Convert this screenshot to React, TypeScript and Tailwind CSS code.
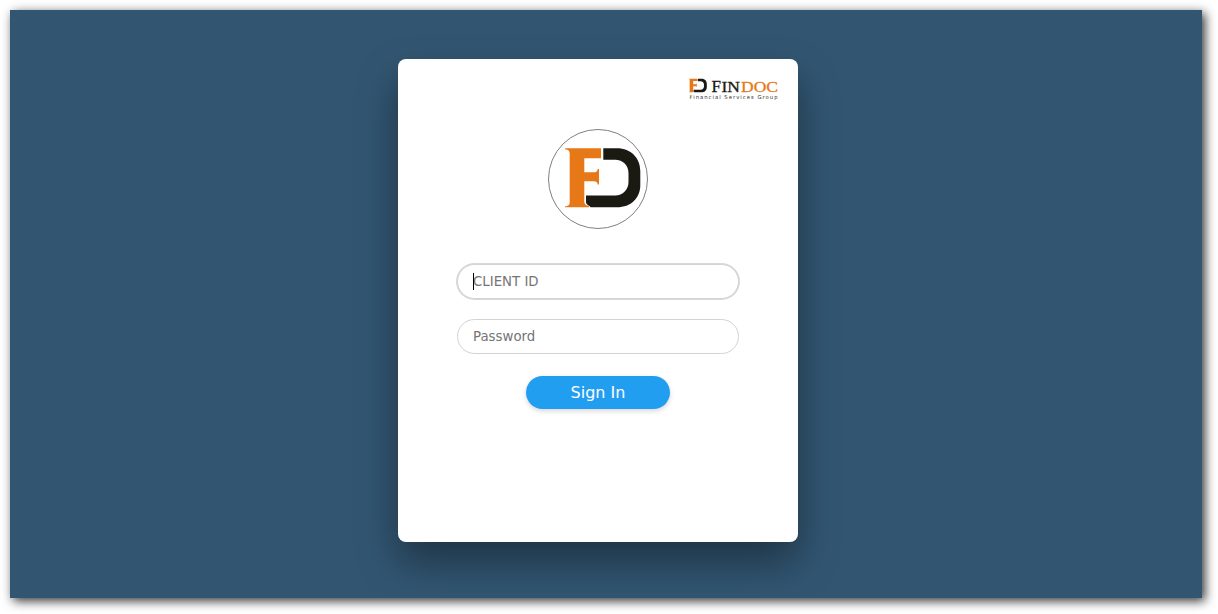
import React from "react";

function Mark() {
  return (
    <>
      <path
        fill="#e77817"
        d="M17 19.2H53V29.3H36.3V43.3H46C48.3 43.3 49.3 42.5 49.8 40H51V55.5H49.8C49.3 53.2 48.3 52.3 46 52.3H36.3V73C36.5 75.5 38 76.5 41 77V78.3H17V77.3C20.5 77 21.7 76 21.7 73V25C21.7 22 20.5 20.5 17 20.2Z"
      />
      <path
        fill="#1b1a12"
        d="M55.3 19.2H69C83 19.2 92.3 29 92.3 42V56C92.3 69 83 78.3 69 78.3H42.5C42.3 76.5 38.2 76.5 38 73V66.5H67C75 66.5 80.5 60.5 80.5 53V44C80.5 36.5 75 30.7 67 30.7H55.3Z"
      />
    </>
  );
}

function BrandLogo() {
  return (
    <svg width="92" height="24" viewBox="0 0 92 24" role="img">
      <svg x="1.5" y="1.5" width="18.5" height="14" viewBox="17 19 76 59.5" preserveAspectRatio="none">
        <Mark />
      </svg>
      <g fontFamily="'Liberation Serif', serif" strokeWidth="0.3">
        <text x="24.5" y="14.7" fontSize="17" fill="#1b1a12" stroke="#1b1a12" textLength="9.5" lengthAdjust="spacingAndGlyphs">F</text>
        <text x="34.5" y="14.7" fontSize="15.5" fill="#1b1a12" stroke="#1b1a12" textLength="18.5" lengthAdjust="spacingAndGlyphs">IN</text>
        <text x="54" y="14.7" fontSize="15.5" fill="#e77817" stroke="#e77817" textLength="37" lengthAdjust="spacingAndGlyphs">DOC</text>
      </g>
      <text x="2.5" y="21.5" fontFamily="'DejaVu Sans', sans-serif" fontSize="5.3" fill="#333333" textLength="88">
        Financial Services Group
      </text>
    </svg>
  );
}

const inputClass =
  "block h-[35px] w-[282px] rounded-full border border-[#d3d3d3] bg-white pl-[15px] pr-4 text-[13.333px] text-[#333] caret-transparent outline-none placeholder:text-[#757575]";

export default function App() {
  return (
    <div className="h-[614px] w-[1218px] overflow-hidden bg-white p-[10px] font-['DejaVu_Sans',sans-serif]">
      <div className="h-[588px] w-[1192px] shadow-[3px_3px_10px_rgba(0,0,0,0.8)]">
        <div className="flex h-full items-start overflow-hidden bg-[#325672] pl-[388px] pt-[49px]">
          <form
            className="flex h-[483px] w-[400px] flex-col items-center rounded-lg bg-white shadow-[0_20px_40px_rgba(0,0,0,0.4)]"
            onSubmit={(e) => e.preventDefault()}
          >
            <div className="flex h-[70px] w-full justify-end pr-[19px] pt-[18px]">
              <BrandLogo />
            </div>
            <svg width="100" height="100" viewBox="0 0 100 100">
              <circle cx="50" cy="50" r="49.5" fill="none" stroke="#808080" />
              <Mark />
            </svg>
            <div className="relative mt-[35px]">
              <input
                className={`${inputClass} shadow-[0_0_0_1px_#dbd7d9]`}
                type="text"
                placeholder="CLIENT ID"
              />
              <span className="absolute left-4 top-[9px] h-[17px] w-px bg-black" />
            </div>
            <input className={`${inputClass} mt-5`} type="password" placeholder="Password" />
            <button
              className="mt-[22px] h-[33px] w-[144px] rounded-full bg-[#229ef1] text-base text-white shadow-[0_2px_5px_rgba(50,50,93,0.2)]"
              type="submit"
            >
              Sign In
            </button>
          </form>
        </div>
      </div>
    </div>
  );
}
